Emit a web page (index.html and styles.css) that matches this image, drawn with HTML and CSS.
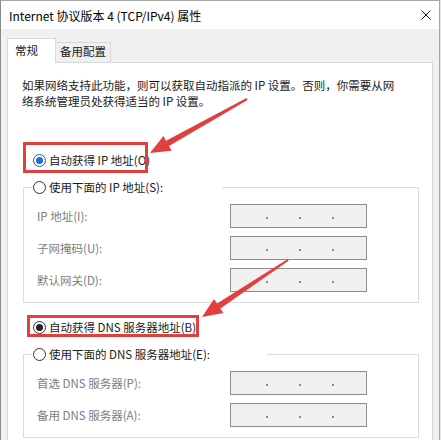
FILE: index.html
```html
<!DOCTYPE html>
<html lang="zh-CN">
<head>
<meta charset="utf-8">
<title>Internet 协议版本 4 (TCP/IPv4) 属性</title>
<link rel="stylesheet" href="styles.css">
</head>
<body>
<div class="window">
  <div class="titlebar">
    <span class="title">Internet 协议版本 4 (TCP/IPv4) 属性</span>
    <svg class="close" width="10" height="10" viewBox="0 0 10 10"><path d="M0.5 0.5 L9.5 9.5 M9.5 0.5 L0.5 9.5" stroke="#1a1a1a" stroke-width="1" fill="none"/></svg>
  </div>
  <div class="body">
    <div class="tabs">
      <div class="tab active">常规</div>
      <div class="tab">备用配置</div>
    </div>
    <div class="panel">
      <p class="intro">如果网络支持此功能，则可以获取自动指派的 IP 设置。否则，你需要从网络系统管理员处获得适当的 IP 设置。</p>

      <div class="option option-auto-ip">
        <span class="radio on blue"></span><span>自动获得 IP 地址(O)</span>
        <span class="mark mark-ip"></span>
      </div>

      <div class="group group-ip">
        <div class="group-head head-ip"><span class="radio"></span><span>使用下面的 IP 地址(S):</span></div>
        <div class="fields">
          <span class="label">IP 地址(I):</span>
          <div class="ipbox"><span class="dot"></span><span class="dot"></span><span class="dot"></span></div>
          <span class="label">子网掩码(U):</span>
          <div class="ipbox"><span class="dot"></span><span class="dot"></span><span class="dot"></span></div>
          <span class="label">默认网关(D):</span>
          <div class="ipbox"><span class="dot"></span><span class="dot"></span><span class="dot"></span></div>
        </div>
      </div>

      <div class="option option-auto-dns">
        <span class="radio on"></span><span>自动获得 DNS 服务器地址(B)</span>
        <span class="mark mark-dns"></span>
      </div>

      <div class="group group-dns">
        <div class="group-head head-dns"><span class="radio"></span><span>使用下面的 DNS 服务器地址(E):</span></div>
        <div class="fields">
          <span class="label">首选 DNS 服务器(P):</span>
          <div class="ipbox"><span class="dot"></span><span class="dot"></span><span class="dot"></span></div>
          <span class="label">备用 DNS 服务器(A):</span>
          <div class="ipbox"><span class="dot"></span><span class="dot"></span><span class="dot"></span></div>
        </div>
      </div>
    </div>
  </div>

  <svg class="arrows" width="441" height="440" viewBox="0 0 441 440">
    <polygon points="246.5,98.1 166,140.7 163.4,135.9 150,153 171.6,150.7 169,145.9 247.5,99.9"/>
    <polygon points="287.4,259.2 217,303.5 214,298.9 202,317 223.4,313.1 220.4,308.5 288.6,260.8"/>
  </svg>
</div>
</body>
</html>
```

FILE: styles.css
```css
html {
  background: #e6e6e6;
}

body {
  margin: 0;
  font-family: "Noto Sans CJK SC", "Microsoft YaHei", "Noto Sans", sans-serif;
  font-size: 11.5px;
  color: #1a1a1a;
}

*, *::before, *::after {
  box-sizing: border-box;
}

.window {
  position: relative;
  width: 440px;
  height: 440px;
  border-top: 1px solid #a6a6a6;
  border-left: 1px solid #8a8a8a;
  border-right: 1px solid #a6a6a6;
  background: #f0f0f0;
  overflow: hidden;
}

.titlebar {
  height: 28px;
  background: #ffffff;
  display: flex;
  align-items: center;
  justify-content: space-between;
  padding: 0 8px;
}

.title {
  font-size: 12px;
  color: #000;
  line-height: 28px;
  padding-top: 1px;
}

.close {
  display: block;
}

.body {
  padding: 9px 6px 0 6px;
}

.tabs {
  display: flex;
  align-items: flex-end;
}

.tab {
  width: 56px;
  margin-left: -1px;
  background: #f0f0f0;
  border: 1px solid #d9d9d9;
  border-bottom: none;
  line-height: 16px;
  padding: 0 3px 3px 4px;
  color: #1a1a1a;
}

.tab.active {
  width: 49px;
  margin-left: 0;
  margin-bottom: -1px;
  padding: 3px 4px 5px 7px;
  background: #ffffff;
  position: relative;
  z-index: 1;
}

.panel {
  background: #ffffff;
  border: 1px solid #d9d9d9;
  padding: 14px 13px 0 14px;
  height: 420px;
}

.intro {
  margin: 0;
  width: 380px;
  line-height: 16px;
}

.option {
  position: relative;
  display: flex;
  align-items: center;
  gap: 3px;
  height: 18px;
  line-height: 18px;
  margin-left: 11px;
}

.option-auto-ip {
  margin-top: 42px;
}

.option-auto-dns {
  margin-top: 15px;
}

.radio {
  width: 13px;
  height: 13px;
  flex: none;
  border: 1px solid #333333;
  border-radius: 50%;
  background: #ffffff;
  display: flex;
  align-items: center;
  justify-content: center;
}

.radio.on::after {
  content: "";
  width: 7px;
  height: 7px;
  border-radius: 50%;
  background: #222222;
}

.radio.blue {
  border-color: #2b5d9c;
}

.radio.blue::after {
  background: #1a72d2;
}

.mark {
  position: absolute;
  border: 3px solid #e2403f;
  pointer-events: none;
}

.mark-ip {
  left: -10px;
  top: -9px;
  width: 125px;
  height: 31px;
}

.mark-dns {
  left: -6px;
  top: -3px;
  width: 172px;
  height: 22px;
}

.group {
  border: 1px solid #dcdcdc;
  margin: 18px 0 0 1px;
  padding: 0 0 10px 13px;
}

.group-head {
  display: flex;
  align-items: center;
  gap: 3px;
  height: 18px;
  line-height: 18px;
  margin: -10px 0 0 -5px;
  padding-left: 1px;
  background: #ffffff;
}

.head-ip {
  width: 190px;
}

.head-dns {
  width: 235px;
}

.fields {
  display: grid;
  grid-template-columns: 193px 137px;
  row-gap: 8px;
  margin-top: 8px;
  align-items: center;
}

.label {
  color: #7d7d7d;
  line-height: 18px;
}

.ipbox {
  height: 24px;
  border: 1px solid #8c8c8c;
  background: #f0f0f0;
  display: flex;
  align-items: flex-start;
  gap: 31px;
  padding: 12px 0 0 35px;
}

.dot {
  width: 2px;
  height: 2px;
  border-radius: 1px;
  background: #666666;
}

.arrows {
  position: absolute;
  left: -1px;
  top: -1px;
  pointer-events: none;
}

.arrows polygon {
  fill: #e2403f;
}
```
